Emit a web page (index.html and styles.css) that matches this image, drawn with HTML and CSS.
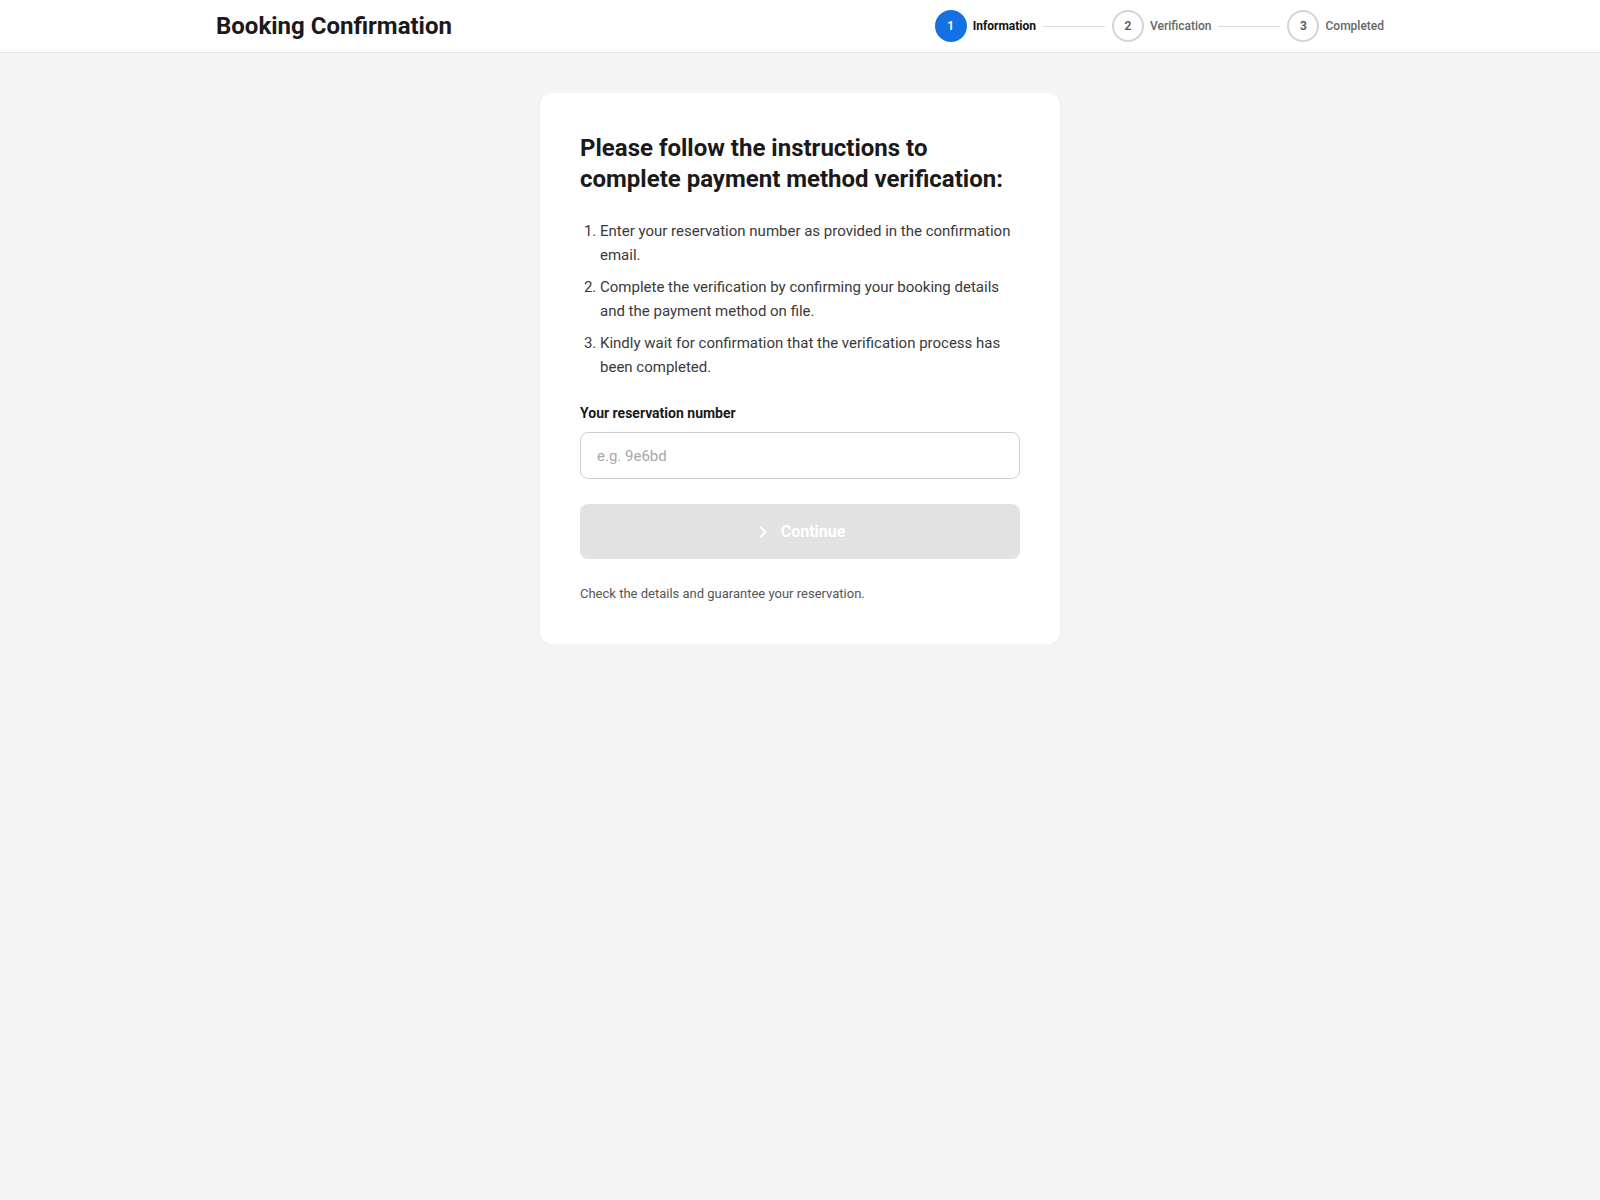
FILE: index.html
```html
<!DOCTYPE html>
<html lang="en">
<head>
    <meta charset="UTF-8">
    <meta name="viewport" content="width=device-width, initial-scale=1.0">
    <title>Booking Confirmation</title>
    <link rel="stylesheet" href="styles.css">
</head>
<body>
    <header class="topbar">
        <div class="topbar-inner">
            <h1 class="brand">Booking Confirmation</h1>
            <ol class="steps">
                <li class="step active"><span class="step-num">1</span><span class="step-label">Information</span></li>
                <li class="step-line"></li>
                <li class="step"><span class="step-num">2</span><span class="step-label">Verification</span></li>
                <li class="step-line"></li>
                <li class="step"><span class="step-num">3</span><span class="step-label">Completed</span></li>
            </ol>
        </div>
    </header>

    <main class="page">
        <form class="card" id="verify-form">
            <h2 class="card-title">Please follow the instructions to complete payment method verification:</h2>
            <ol class="instructions">
                <li>Enter your reservation number as provided in the confirmation email.</li>
                <li>Complete the verification by confirming your booking details and the payment method on file.</li>
                <li>Kindly wait for confirmation that the verification process has been completed.</li>
            </ol>
            <label class="field-label" for="reservation">Your reservation number</label>
            <input class="field-input" type="text" id="reservation" name="reservation" placeholder="e.g. 9e6bd">
            <button class="btn-continue" type="submit" disabled>
                <svg width="16" height="16" viewBox="0 0 16 16" aria-hidden="true"><path d="M6 3.5L10.5 8 6 12.5" fill="none" stroke="currentColor" stroke-width="2" stroke-linecap="round" stroke-linejoin="round"/></svg>
                <span>Continue</span>
            </button>
            <p class="note">Check the details and guarantee your reservation.</p>
        </form>
    </main>
</body>
</html>
```

FILE: styles.css
```css
*{
    margin: 0;
    padding: 0;
    box-sizing: border-box;
}
body{
    font-family: Roboto, "Liberation Sans", Arial, sans-serif;
    background-color: #f4f4f4;
    color: #1a1a1a;
}

/* top bar */
.topbar{
    background-color: #fff;
    border-bottom: 1px solid #e2e2e2;
}
.topbar-inner{
    max-width: 1200px;
    height: 52px;
    margin: 0 auto;
    padding: 0 16px;
    display: flex;
    align-items: center;
    justify-content: space-between;
}
.brand{
    font-size: 24px;
    font-weight: 700;
    color: #1a1a1a;
}
.steps{
    list-style: none;
    display: flex;
    align-items: center;
    gap: 7px;
}
.step{
    display: flex;
    align-items: center;
    gap: 6px;
}
.step-num{
    width: 32px;
    height: 32px;
    border-radius: 50%;
    border: 2px solid #d4d4d4;
    display: flex;
    align-items: center;
    justify-content: center;
    font-size: 12px;
    font-weight: 600;
    color: #555;
}
.step-label{
    font-size: 12px;
    font-weight: 500;
    color: #666;
}
.step.active .step-num{
    background-color: #1570e4;
    border-color: #1570e4;
    color: #fff;
}
.step.active .step-label{
    color: #111;
    font-weight: 700;
}
.step-line{
    width: 62px;
    height: 1px;
    background-color: #dcdcdc;
}

/* card */
.page{
    display: flex;
    justify-content: center;
    padding-top: 40px;
}
.card{
    width: 520px;
    background-color: #fff;
    border-radius: 12px;
    padding: 40px;
    box-shadow: 0 1px 3px rgba(0, 0, 0, 0.05);
    display: flex;
    flex-direction: column;
}
.card-title{
    font-size: 24px;
    line-height: 31px;
    font-weight: 700;
    color: #1a1a1a;
}
.instructions{
    margin-top: 24px;
    padding-left: 20px;
    font-size: 15px;
    line-height: 24px;
    color: #3a3a3a;
}
.instructions li{
    margin-bottom: 8px;
}
.instructions li:last-child{
    margin-bottom: 0;
}
.field-label{
    margin-top: 24px;
    font-size: 14px;
    line-height: 20px;
    font-weight: 700;
    color: #1a1a1a;
}
.field-input{
    margin-top: 9px;
    height: 47px;
    padding: 0 16px;
    border: 1px solid #cfcfcf;
    border-radius: 8px;
    font-family: inherit;
    font-size: 15px;
    color: #333;
    outline: none;
}
.field-input::placeholder{
    color: #a8a8a8;
}
.btn-continue{
    margin-top: 25px;
    height: 55px;
    border: none;
    border-radius: 8px;
    background-color: #e2e2e2;
    color: #fff;
    font-family: inherit;
    font-size: 16px;
    font-weight: 700;
    display: flex;
    align-items: center;
    justify-content: center;
    gap: 10px;
}
.note{
    margin-top: 25px;
    font-size: 13px;
    line-height: 20px;
    color: #555;
}
```
